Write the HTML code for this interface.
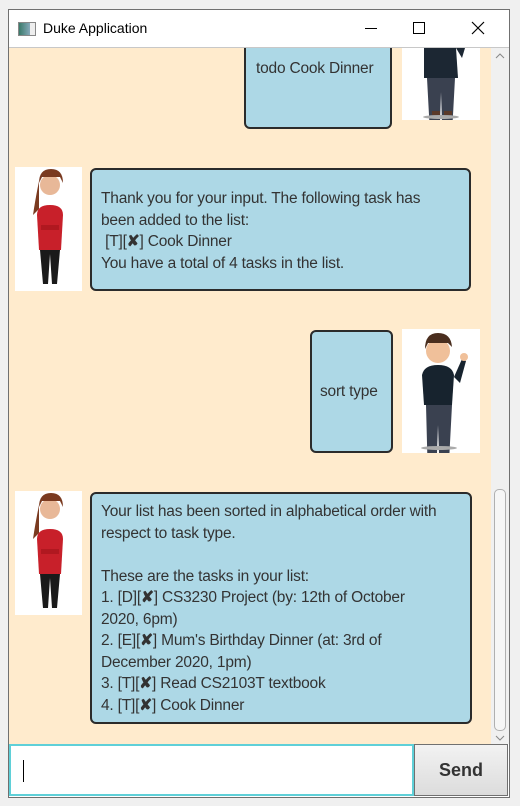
<!DOCTYPE html>
<html><head><style>
body{margin:0;width:520px;height:806px;background:#f0f0f0;position:relative;overflow:hidden;font-family:"Liberation Sans",sans-serif}
.win{position:absolute;left:8px;top:9px;width:500px;height:787px;border:1px solid #707070;background:#fff}
.title{position:absolute;left:0;top:0;width:500px;height:37px;background:#fff;border-bottom:1px solid #c8c8c8}
.content{position:absolute;left:0;top:38px;width:482px;height:696px;background:#ffebcd;overflow:hidden}
.sb{position:absolute;left:482px;top:38px;width:18px;height:696px;background:#f0f0f0}
.b{position:absolute;background:#add8e6;border:2px solid #2b2b2b;border-radius:6px;color:#333;font-size:15.5px;line-height:21.5px;white-space:nowrap;box-sizing:border-box;letter-spacing:-0.2px}
.av{position:absolute;background:#fff}
</style></head><body>
<div class="win">
 <div class="title">
  <div style="position:absolute;left:9px;top:12px;width:16px;height:12px;border:1px solid #888;background:linear-gradient(90deg,#3a7a6a,#8ab 70%,#eee 70%)"></div>
  <div style="position:absolute;left:34px;top:10px;font-size:14px;color:#000">Duke Application</div>
  <div style="position:absolute;left:356px;top:18px;width:12px;height:1px;background:#000"></div>
  <div style="position:absolute;left:404px;top:12px;width:10px;height:10px;border:1px solid #000"></div>
  <svg style="position:absolute;left:462px;top:11px" width="14" height="14"><path d="M1 1L13 13M13 1L1 13" stroke="#000" stroke-width="1.2"/></svg>
 </div>
 <div class="content">
  <div class="b" style="left:235px;top:-20px;width:148px;height:101px;padding:28px 0 0 10px">todo Cook Dinner</div>
  <div class="av" style="left:393px;top:0;width:78px;height:72px">
   <svg width="78" height="72"><path d="M22 0h32l2 30h-34z" fill="#1c2733"/><path d="M25 30h28l-4 74h-8l-2-60-2 60h-8z" fill="#3a4150"/><path d="M54 0l8-12 4 2-6 20z" fill="#1c2733"/><ellipse cx="39" cy="69" rx="18" ry="2" fill="#aaa"/><rect x="30" y="63" width="8" height="4" fill="#5a3a2a"/><rect x="42" y="63" width="8" height="4" fill="#5a3a2a"/></svg>
  </div>

  <div class="av" style="left:6px;top:119px;width:67px;height:124px">
   <svg width="67" height="124"><circle cx="35" cy="18" r="10" fill="#e8b898"/><path d="M24 16q0-14 12-14t12 14l-3-6h-18z" fill="#7a3a20"/><path d="M24 14q-4 20-6 34l6-6z" fill="#7a3a20"/><path d="M22 48q0-10 13-10t13 10l-2 35h-22z" fill="#c8202a"/><path d="M25 83h20l-3 34h-5l-2-30-2 30h-5z" fill="#1a1a1a"/><rect x="26" y="58" width="18" height="5" fill="#b01820"/></svg>
  </div>
  <div class="b" style="left:81px;top:120px;width:381px;height:123px;padding:18px 0 0 9px">Thank you for your input. The following task has<br>been added to the list:<br>&nbsp;[T][<b>✘</b>] Cook Dinner<br>You have a total of 4 tasks in the list.</div>

  <div class="b" style="left:301px;top:282px;width:83px;height:123px;padding:0 0 0 8px;line-height:119px">sort type</div>
  <div class="av" style="left:393px;top:281px;width:78px;height:124px">
   <svg width="78" height="124"><circle cx="36" cy="22" r="12" fill="#f0c09a"/><path d="M23 20q0-16 13-16t14 14l-4-4h-20z" fill="#4a2e1e"/><path d="M20 46q2-10 16-10t16 10l-2 30h-28z" fill="#17232e"/><path d="M52 48l8-18 4 2-6 22z" fill="#17232e"/><circle cx="62" cy="28" r="4" fill="#f0c09a"/><path d="M24 76h26l-4 76h-8l-2-56-2 56h-8z" fill="#3a4150"/><ellipse cx="37" cy="119" rx="18" ry="2" fill="#aaa"/></svg>
  </div>

  <div class="av" style="left:6px;top:443px;width:67px;height:124px">
   <svg width="67" height="124"><circle cx="35" cy="18" r="10" fill="#e8b898"/><path d="M24 16q0-14 12-14t12 14l-3-6h-18z" fill="#7a3a20"/><path d="M24 14q-4 20-6 34l6-6z" fill="#7a3a20"/><path d="M22 48q0-10 13-10t13 10l-2 35h-22z" fill="#c8202a"/><path d="M25 83h20l-3 34h-5l-2-30-2 30h-5z" fill="#1a1a1a"/><rect x="26" y="58" width="18" height="5" fill="#b01820"/></svg>
  </div>
  <div class="b" style="left:81px;top:444px;width:382px;height:232px;padding:7px 0 0 9px">Your list has been sorted in alphabetical order with<br>respect to task type.<br><br>These are the tasks in your list:<br>1. [D][<b>✘</b>] CS3230 Project (by: 12th of October<br>2020, 6pm)<br>2. [E][<b>✘</b>] Mum's Birthday Dinner (at: 3rd of<br>December 2020, 1pm)<br>3. [T][<b>✘</b>] Read CS2103T textbook<br>4. [T][<b>✘</b>] Cook Dinner</div>
 </div>
 <div class="sb">
  <svg style="position:absolute;left:4px;top:4px" width="10" height="8"><path d="M1 6L5 2L9 6" stroke="#888" fill="none"/></svg>
  <div style="position:absolute;left:3px;top:441px;width:10px;height:240px;border:1px solid #b0b0b0;border-radius:5px;background:#f6f6f6"></div>
  <svg style="position:absolute;left:4px;top:686px" width="10" height="8"><path d="M1 2L5 6L9 2" stroke="#888" fill="none"/></svg>
 </div>
 <div style="position:absolute;left:0;top:734px;width:405px;height:52px;border:2px solid #5fd0d8;box-sizing:border-box;background:#fff">
  <div style="position:absolute;left:12px;top:14px;width:1px;height:22px;background:#000"></div>
 </div>
 <div style="position:absolute;left:405px;top:734px;width:94px;height:52px;border:1px solid #707070;box-sizing:border-box;background:linear-gradient(#f2f2f2,#dcdcdc);font-size:18px;font-weight:bold;color:#333;text-align:center;line-height:50px">Send</div>
</div>
</body></html>
